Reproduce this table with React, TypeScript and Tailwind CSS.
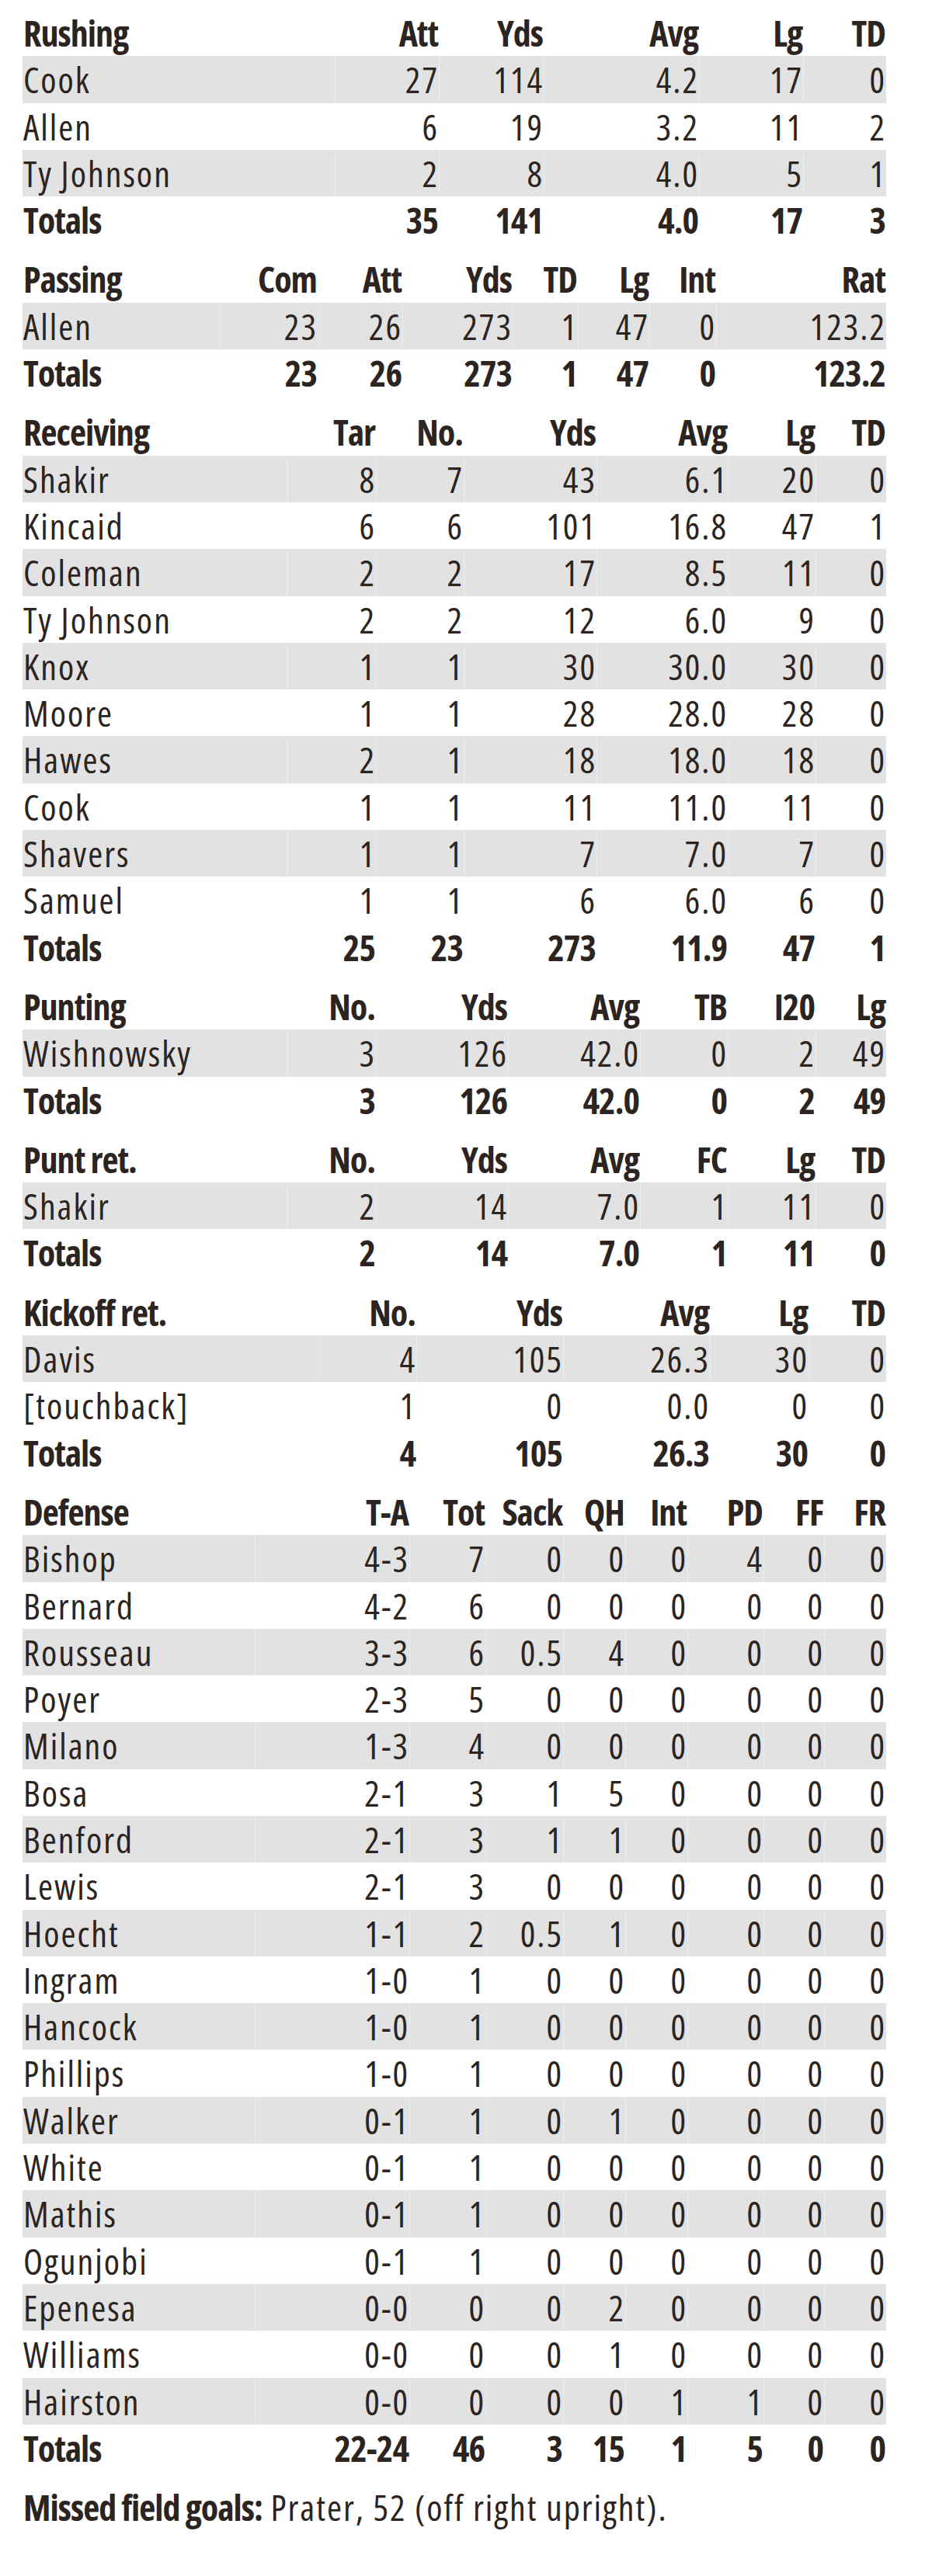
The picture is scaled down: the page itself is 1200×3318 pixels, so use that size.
import React from "react";

interface Section {
  title: string;
  cols: string[];
  grid: string;
  rows: string[][];
  totals: string[];
}

const SECTIONS: Section[] = [
  {
    title: "Rushing",
    cols: ["Att", "Yds", "Avg", "Lg", "TD"],
    grid: "grid-cols-[402px_134px_135px_200px_134px_1fr]",
    rows: [
      ["Cook", "27", "114", "4.2", "17", "0"],
      ["Allen", "6", "19", "3.2", "11", "2"],
      ["Ty Johnson", "2", "8", "4.0", "5", "1"],
    ],
    totals: ["35", "141", "4.0", "17", "3"],
  },
  {
    title: "Passing",
    cols: ["Com", "Att", "Yds", "TD", "Lg", "Int", "Rat"],
    grid: "grid-cols-[254px_126px_109px_142px_84px_92px_86px_1fr]",
    rows: [["Allen", "23", "26", "273", "1", "47", "0", "123.2"]],
    totals: ["23", "26", "273", "1", "47", "0", "123.2"],
  },
  {
    title: "Receiving",
    cols: ["Tar", "No.", "Yds", "Avg", "Lg", "TD"],
    grid: "grid-cols-[341px_114px_113px_171px_169px_113px_1fr]",
    rows: [
      ["Shakir", "8", "7", "43", "6.1", "20", "0"],
      ["Kincaid", "6", "6", "101", "16.8", "47", "1"],
      ["Coleman", "2", "2", "17", "8.5", "11", "0"],
      ["Ty Johnson", "2", "2", "12", "6.0", "9", "0"],
      ["Knox", "1", "1", "30", "30.0", "30", "0"],
      ["Moore", "1", "1", "28", "28.0", "28", "0"],
      ["Hawes", "2", "1", "18", "18.0", "18", "0"],
      ["Cook", "1", "1", "11", "11.0", "11", "0"],
      ["Shavers", "1", "1", "7", "7.0", "7", "0"],
      ["Samuel", "1", "1", "6", "6.0", "6", "0"],
    ],
    totals: ["25", "23", "273", "11.9", "47", "1"],
  },
  {
    title: "Punting",
    cols: ["No.", "Yds", "Avg", "TB", "I20", "Lg"],
    grid: "grid-cols-[341px_114px_170px_170px_113px_113px_1fr]",
    rows: [["Wishnowsky", "3", "126", "42.0", "0", "2", "49"]],
    totals: ["3", "126", "42.0", "0", "2", "49"],
  },
  {
    title: "Punt ret.",
    cols: ["No.", "Yds", "Avg", "FC", "Lg", "TD"],
    grid: "grid-cols-[341px_114px_170px_170px_113px_113px_1fr]",
    rows: [["Shakir", "2", "14", "7.0", "1", "11", "0"]],
    totals: ["2", "14", "7.0", "1", "11", "0"],
  },
  {
    title: "Kickoff ret.",
    cols: ["No.", "Yds", "Avg", "Lg", "TD"],
    grid: "grid-cols-[380px_127px_189px_189px_127px_1fr]",
    rows: [
      ["Davis", "4", "105", "26.3", "30", "0"],
      ["[touchback]", "1", "0", "0.0", "0", "0"],
    ],
    totals: ["4", "105", "26.3", "30", "0"],
  },
  {
    title: "Defense",
    cols: ["T-A", "Tot", "Sack", "QH", "Int", "PD", "FF", "FR"],
    grid: "grid-cols-[299px_199px_98px_100px_80px_80px_98px_78px_1fr]",
    rows: [
      ["Bishop", "4-3", "7", "0", "0", "0", "4", "0", "0"],
      ["Bernard", "4-2", "6", "0", "0", "0", "0", "0", "0"],
      ["Rousseau", "3-3", "6", "0.5", "4", "0", "0", "0", "0"],
      ["Poyer", "2-3", "5", "0", "0", "0", "0", "0", "0"],
      ["Milano", "1-3", "4", "0", "0", "0", "0", "0", "0"],
      ["Bosa", "2-1", "3", "1", "5", "0", "0", "0", "0"],
      ["Benford", "2-1", "3", "1", "1", "0", "0", "0", "0"],
      ["Lewis", "2-1", "3", "0", "0", "0", "0", "0", "0"],
      ["Hoecht", "1-1", "2", "0.5", "1", "0", "0", "0", "0"],
      ["Ingram", "1-0", "1", "0", "0", "0", "0", "0", "0"],
      ["Hancock", "1-0", "1", "0", "0", "0", "0", "0", "0"],
      ["Phillips", "1-0", "1", "0", "0", "0", "0", "0", "0"],
      ["Walker", "0-1", "1", "0", "1", "0", "0", "0", "0"],
      ["White", "0-1", "1", "0", "0", "0", "0", "0", "0"],
      ["Mathis", "0-1", "1", "0", "0", "0", "0", "0", "0"],
      ["Ogunjobi", "0-1", "1", "0", "0", "0", "0", "0", "0"],
      ["Epenesa", "0-0", "0", "0", "2", "0", "0", "0", "0"],
      ["Williams", "0-0", "0", "0", "1", "0", "0", "0", "0"],
      ["Hairston", "0-0", "0", "0", "0", "1", "1", "0", "0"],
    ],
    totals: ["22-24", "46", "3", "15", "1", "5", "0", "0"],
  },
];

// bold = headers + totals; regular text gets a little tracking to match the wider set
function Row({ grid, cells, bold, shaded }: { grid: string; cells: string[]; bold?: boolean; shaded?: boolean }) {
  return (
    <div className={`grid ${grid} h-[60.3px] ${shaded ? "bg-[#e2e2e2]" : ""}`}>
      {cells.map((c, i) => (
        <div
          key={i}
          className={`pt-[2px] leading-[56px] whitespace-nowrap ${
            i === 0 ? "pl-[1px]" : `text-right border-l border-white/40 ${bold ? "pr-[1px]" : "pr-0"}`
          } ${bold ? "font-bold tracking-[-1px]" : "tracking-[2px]"}`}
        >
          {c}
        </div>
      ))}
    </div>
  );
}

export default function App() {
  return (
    <div className="bg-white text-[#2b2420] text-[46px] font-['Open_Sans',sans-serif] font-stretch-condensed pt-[12px] pl-[29px] pb-[60px]">
      <div className="w-[1112px] flex flex-col gap-[16px]">
        {SECTIONS.map((s) => (
          <div key={s.title}>
            <Row grid={s.grid} cells={[s.title, ...s.cols]} bold />
            {s.rows.map((r, i) => (
              <Row key={i} grid={s.grid} cells={r} shaded={i % 2 === 0} />
            ))}
            <Row grid={s.grid} cells={["Totals", ...s.totals]} bold />
          </div>
        ))}
        <p className="pl-[1px] pt-[2px] leading-[56px] whitespace-nowrap tracking-[2px]">
          <span className="font-bold tracking-[-1px]">Missed field goals:</span> Prater, 52 (off right upright).
        </p>
      </div>
    </div>
  );
}
